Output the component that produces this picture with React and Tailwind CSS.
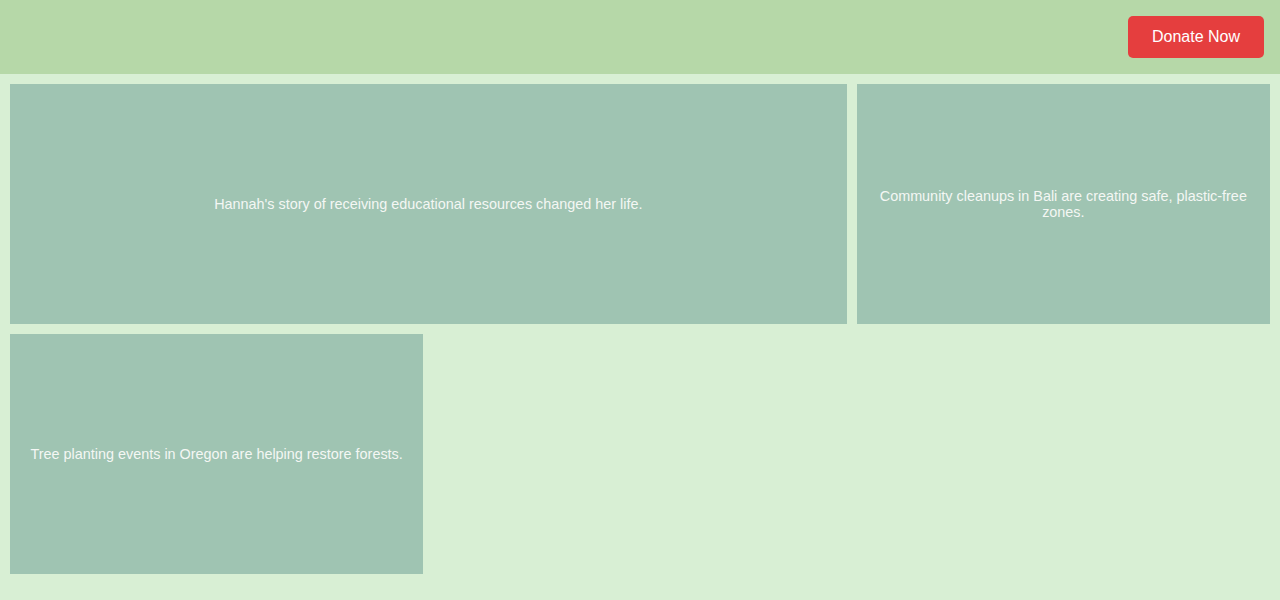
export default function App() {
  const font = { fontFamily: '"Liberation Sans", Arial, sans-serif' };
  return (
    <div className="min-h-screen bg-[#d8efd4]" style={font}>
      <header className="flex justify-end p-4 bg-[#b6d8a8]">
        <button className="px-6 py-3 rounded-[5px] bg-[#e53e3e] text-white text-base leading-[normal]">
          Donate Now
        </button>
      </header>
      <main className="grid grid-cols-3 gap-[10px] p-[10px]">
        <div className="col-span-2 h-[240px] flex items-center justify-center px-5 text-center bg-[#9fc4b2] text-[#f4f7f4] text-[0.9rem] leading-[normal]">
          Hannah's story of receiving educational resources changed her life.
        </div>
        <div className="h-[240px] flex items-center justify-center px-5 text-center bg-[#9fc4b2] text-[#f4f7f4] text-[0.9rem] leading-[normal]">
          Community cleanups in Bali are creating safe, plastic-free zones.
        </div>
        <div className="h-[240px] flex items-center justify-center px-5 text-center bg-[#9fc4b2] text-[#f4f7f4] text-[0.9rem] leading-[normal]">
          Tree planting events in Oregon are helping restore forests.
        </div>
      </main>
    </div>
  );
}
